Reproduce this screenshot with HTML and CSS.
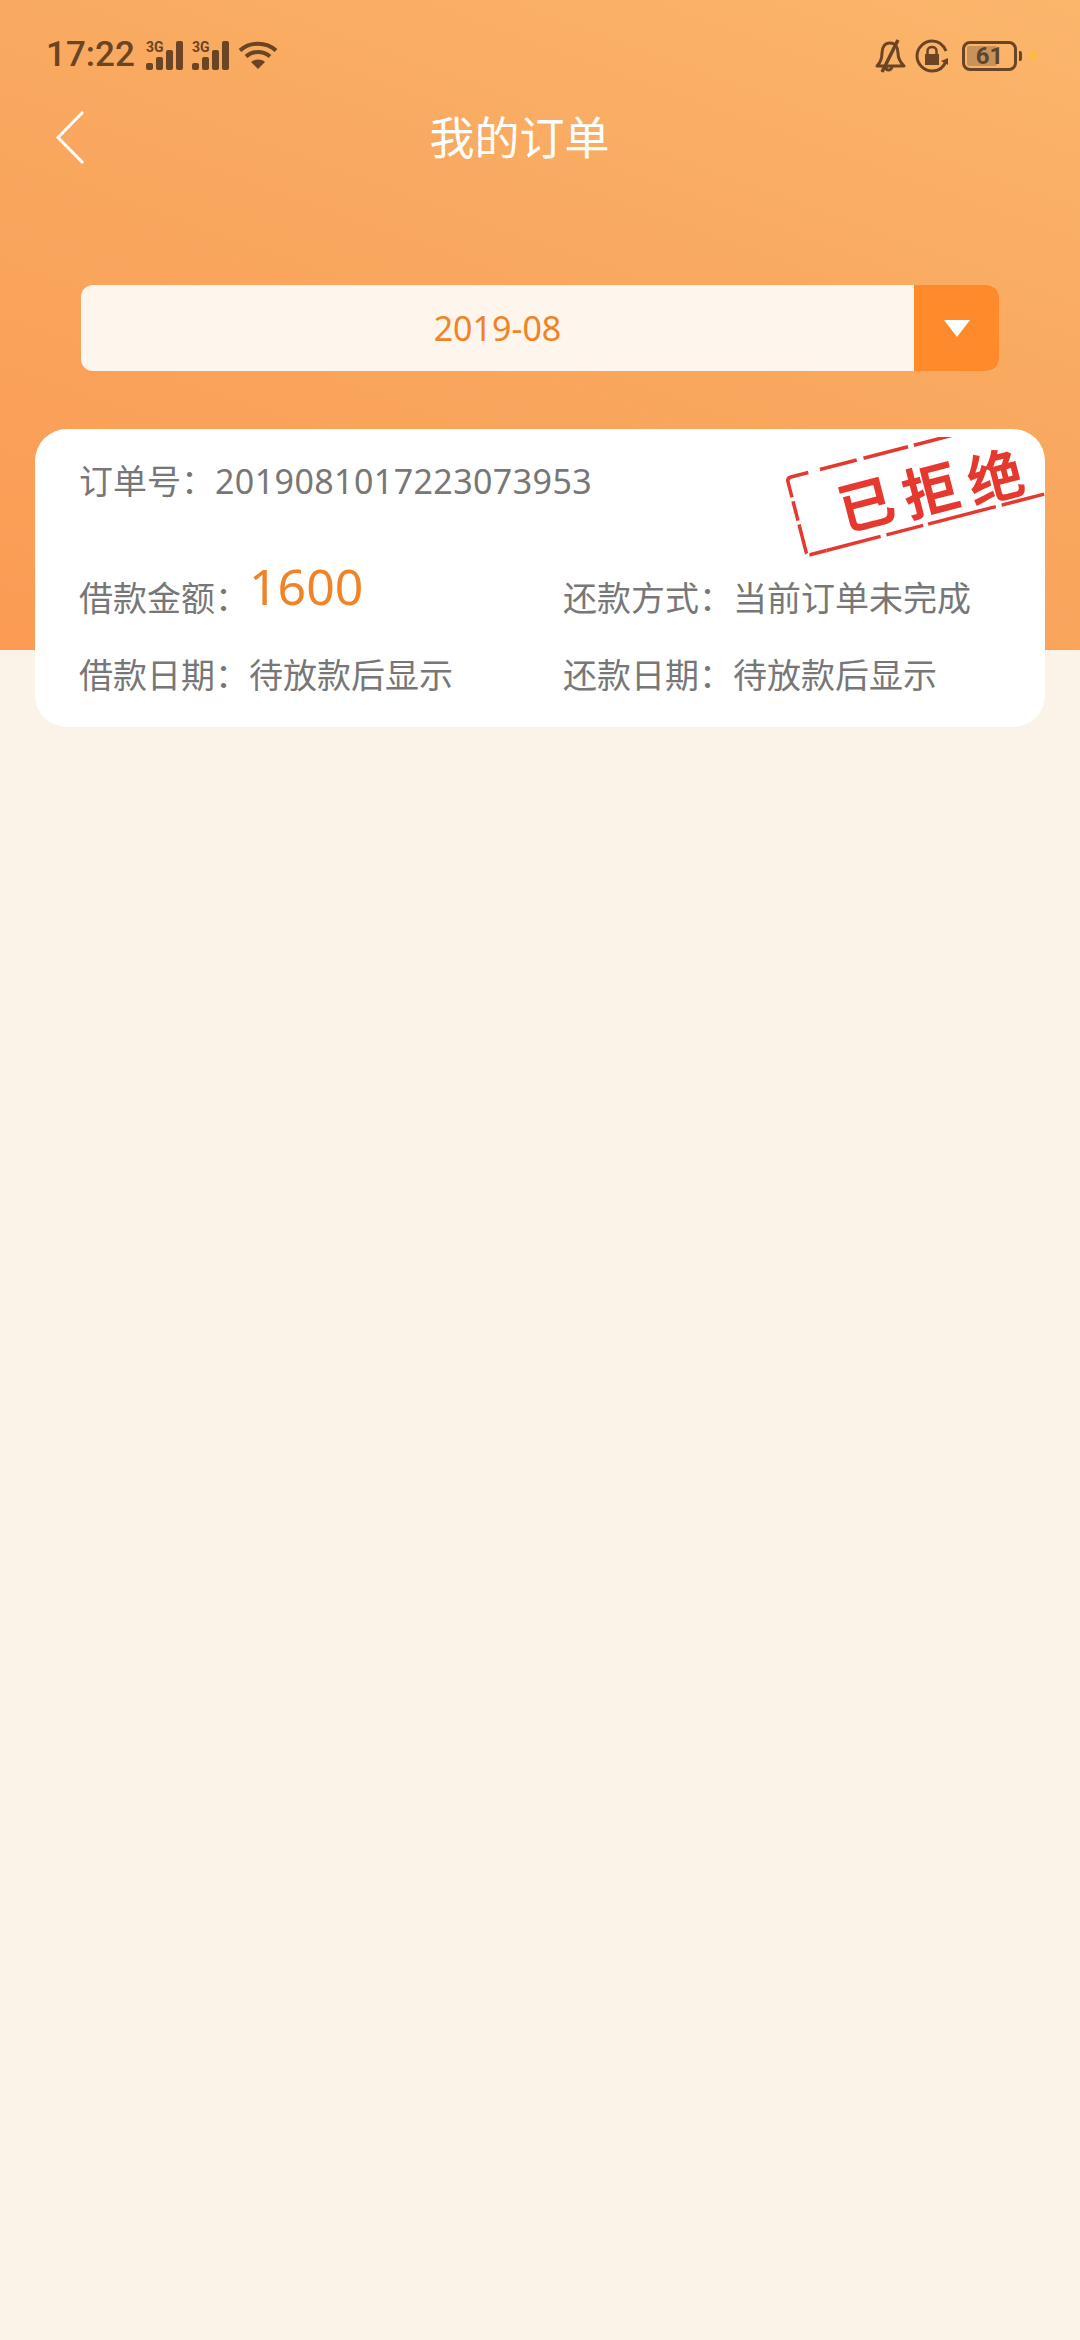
FILE: index.html
```html
<!DOCTYPE html>
<html lang="zh-CN">
<head>
    <meta charset="UTF-8">
    <meta name="viewport" content="width=device-width, initial-scale=1.0">
    <title>我的订单</title>
    <link rel="stylesheet" href="styles.css">
</head>
<body>
    <div class="header">
        <!-- Status bar -->
        <div class="status-bar">
            <div class="status-left">
                <span class="time">17:22</span>
                <svg class="signal" width="38" height="30" viewBox="0 0 38 30">
                    <text x="0" y="12" class="signal-label">3G</text>
                    <rect x="0" y="23" width="7" height="7" rx="2"/>
                    <rect x="10" y="17" width="7" height="13" rx="2"/>
                    <rect x="20" y="10" width="7" height="20" rx="2"/>
                    <rect x="30" y="1" width="7" height="29" rx="2"/>
                </svg>
                <svg class="signal" width="38" height="30" viewBox="0 0 38 30">
                    <text x="0" y="12" class="signal-label">3G</text>
                    <rect x="0" y="23" width="7" height="7" rx="2"/>
                    <rect x="10" y="17" width="7" height="13" rx="2"/>
                    <rect x="20" y="10" width="7" height="20" rx="2"/>
                    <rect x="30" y="1" width="7" height="29" rx="2"/>
                </svg>
                <svg class="wifi" width="40" height="30" viewBox="0 0 40 30" fill="none" stroke="#6b4423" stroke-width="4">
                    <path d="M2 10.500C12 1.500 28 1.500 38 10.500"/>
                    <path d="M8 16.500C15 10.500 25 10.500 32 16.500"/>
                    <path d="M20 29L13 22C17 18.800 23 18.800 27 22Z" fill="#6b4423" stroke="none"/>
                </svg>
            </div>
            <div class="status-right">
                <svg width="32" height="34" viewBox="0 0 32 34" fill="none" stroke="#6b4423" stroke-width="3">
                    <path d="M3 27C7 23 8 20 8 14C8 8 11 4 16 4C21 4 24 8 24 14C24 20 26 23 30 27Z" stroke-linejoin="round"/>
                    <path d="M12 28C12 32 17 32 18 28"/>
                    <path d="M24 1L8 33" stroke-width="3.500"/>
                </svg>
                <svg width="34" height="34" viewBox="0 0 34 34" fill="none" stroke="#6b4423" stroke-width="3">
                    <path d="M31 12C28 5 23 2 17 2C9 2 2 9 2 17C2 25 9 32 17 32C24 32 29 28 31 22"/>
                    <path d="M26 22L33 19L33 26Z" fill="#6b4423" stroke="none"/>
                    <rect x="10" y="15" width="14" height="11" fill="#6b4423" stroke="none"/>
                    <path d="M12.500 15V12C12.500 6.500 21.500 6.500 21.500 12V15" stroke-width="2.500"/>
                </svg>
                <div class="battery">
                    <div class="battery-body">
                        <div class="battery-level"></div>
                        <span class="battery-num">61</span>
                    </div>
                    <div class="battery-tip"></div>
                    <svg class="bolt" width="8" height="14" viewBox="0 0 8 14"><path d="M5 0L0 8H3L2 14L8 5H5Z" fill="#f7c12e"/></svg>
                </div>
            </div>
        </div>

        <!-- Title -->
        <div class="nav">
            <svg class="back" width="30" height="56" viewBox="0 0 30 56" fill="none" stroke="#fff" stroke-width="3">
                <path d="M28 2L3 27.500L28 53"/>
            </svg>
            <div class="nav-title">我的订单</div>
        </div>

        <!-- Month picker -->
        <div class="month-select">
            <div class="month-value">2019-08</div>
            <div class="month-btn"><span class="triangle"></span></div>
        </div>
    </div>

    <div class="card">
        <svg class="stamp" width="265" height="123" viewBox="0 0 265 123">
            <g transform="translate(7 41) rotate(-14.500)">
                <g class="stamp-border">
                    <path d="M22 0H4Q0 0 0 4V20"/>
                    <path d="M34 0H240" stroke-dasharray="38 7 46 6 52 5 60"/>
                    <path d="M0 24V76Q0 80 4 80H20" stroke-dasharray="20 4 30 3 80"/>
                    <path d="M20 80H300" stroke-dasharray="56 6 38 5 70 6 44 4 60"/>
                </g>
                <text class="stamp-text" x="42 108 174" y="66 69 72">已拒绝</text>
            </g>
        </svg>
        <div class="order-no">订单号&#xFF1A;<span class="order-digits">2019081017223073953</span></div>
        <div class="info-grid">
            <div class="info-item">借款金额&#xFF1A;<span class="amount">1600</span></div>
            <div class="info-item">还款方式&#xFF1A;当前订单未完成</div>
            <div class="info-item">借款日期&#xFF1A;待放款后显示</div>
            <div class="info-item">还款日期&#xFF1A;待放款后显示</div>
        </div>
    </div>
</body>
</html>
```

FILE: styles.css
```css
html, body {
    margin: 0;
    padding: 0;
}
body {
    width: 1080px;
    height: 2340px;
    overflow: hidden;
    background: #fbf2e8;
    font-family: "Noto Sans", "Noto Sans CJK SC", sans-serif;
    font-size: 34px;
    color: #777;
}
.header {
    height: 650px;
    box-sizing: border-box;
    background: linear-gradient(200deg, #fbb66c 0%, #f9a960 40%, #fb9b54 100%);
}
.status-bar {
    height: 110px;
    box-sizing: border-box;
    padding: 39px 43px 0 46px;
    display: flex;
    justify-content: space-between;
    align-items: flex-start;
}
.status-left {
    display: flex;
    align-items: center;
    gap: 8px;
    height: 32px;
}
.time {
    font-family: Roboto, sans-serif;
    font-weight: 500;
    font-size: 35px;
    line-height: 32px;
    color: #6b4423;
    margin-right: 3px;
}
.signal rect {
    fill: #6b4423;
}
.signal-label {
    font-family: Roboto, sans-serif;
    font-weight: 700;
    font-size: 14px;
    fill: #6b4423;
}
.status-right {
    display: flex;
    align-items: center;
    gap: 9px;
    height: 34px;
}
.battery {
    display: flex;
    align-items: center;
    margin-left: 4px;
}
.battery-body {
    position: relative;
    width: 55px;
    height: 30px;
    box-sizing: border-box;
    border: 3px solid #6b4423;
    border-radius: 8px;
    display: flex;
    align-items: center;
    justify-content: center;
}
.battery-level {
    position: absolute;
    left: 2px;
    top: 2px;
    bottom: 2px;
    width: 30px;
    background: #c9925a;
    border-radius: 2px;
}
.battery-num {
    position: relative;
    font-family: Roboto, sans-serif;
    font-weight: 700;
    font-size: 24px;
    color: #5f4530;
}
.battery-tip {
    width: 3px;
    height: 10px;
    margin-left: 2px;
    background: #6b4423;
    border-radius: 0 2px 2px 0;
}
.bolt {
    margin-left: 7px;
}
.nav {
    height: 55px;
    display: flex;
    align-items: center;
    padding-left: 55px;
}
.nav-title {
    flex: 1;
    padding-right: 126px;
    text-align: center;
    font-size: 45px;
    line-height: 55px;
    color: #fff;
}
.month-select {
    display: flex;
    height: 86px;
    margin: 120px 81px 0 81px;
    border-radius: 12px;
    overflow: hidden;
    background: #fef5ec;
}
.month-value {
    flex: 1;
    text-align: center;
    line-height: 86px;
    color: #f08326;
}
.month-btn {
    width: 85px;
    background: #ff8a2c;
    display: flex;
    align-items: center;
    justify-content: center;
}
.triangle {
    width: 0;
    height: 0;
    border-left: 13px solid transparent;
    border-right: 13px solid transparent;
    border-top: 17px solid #fff;
}
.card {
    position: relative;
    margin: -221px 35px 0;
    height: 298px;
    box-sizing: border-box;
    padding: 27px 0 0 44px;
    background: #fff;
    border-radius: 32px;
    overflow: hidden;
}
.stamp {
    position: absolute;
    top: 8px;
    right: 0;
}
.stamp-border path {
    fill: none;
    stroke: #e5392f;
    stroke-width: 3.500;
}
.stamp-text {
    font-family: "Noto Sans CJK SC", sans-serif;
    font-weight: 700;
    font-size: 56px;
    fill: #e5392f;
}
.order-no {
    line-height: 50px;
}
.order-digits {
    letter-spacing: 0.400px;
}
.info-grid {
    display: grid;
    grid-template-columns: 484px 1fr;
    grid-auto-rows: 50px;
    row-gap: 27px;
    margin-top: 67px;
}
.info-item {
    line-height: 50px;
    white-space: nowrap;
}
.amount {
    font-size: 50px;
    line-height: 0;
    vertical-align: 6px;
    color: #f08326;
}
```
